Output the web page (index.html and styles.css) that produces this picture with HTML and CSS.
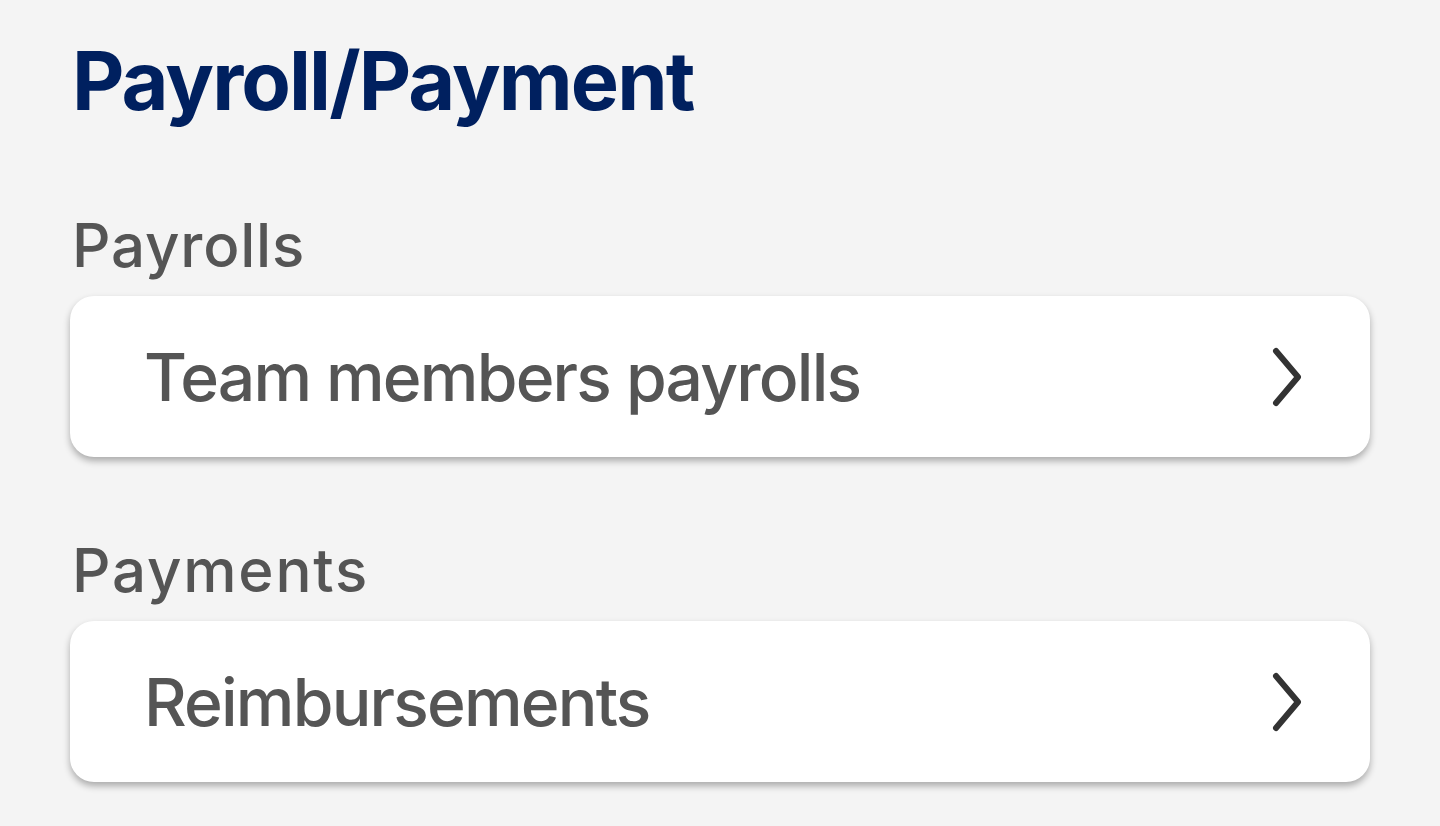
FILE: index.html
```html
<!DOCTYPE html>
<html lang="en">
<head>
    <meta charset="UTF-8">
    <meta name="viewport" content="width=device-width, initial-scale=1.0">
    <title>Payroll/Payment</title>
    <link rel="stylesheet" href="styles.css">
</head>
<body>
    <div class="page">
        <h1 class="title">Payroll/Payment</h1>

        <section class="group">
            <h2 class="group-label">Payrolls</h2>
            <a class="row" href="#">
                <span class="row-text">Team members payrolls</span>
                <svg class="chevron" viewBox="0 0 32 60" width="32" height="60">
                    <path d="M5 4 L27 30 L5 56" fill="none" stroke="#333" stroke-width="6" stroke-linecap="round" stroke-linejoin="round"/>
                </svg>
            </a>
        </section>

        <section class="group">
            <h2 class="group-label">Payments</h2>
            <a class="row" href="#">
                <span class="row-text">Reimbursements</span>
                <svg class="chevron" viewBox="0 0 32 60" width="32" height="60">
                    <path d="M5 4 L27 30 L5 56" fill="none" stroke="#333" stroke-width="6" stroke-linecap="round" stroke-linejoin="round"/>
                </svg>
            </a>
        </section>
    </div>
</body>
</html>
```
FILE: styles.css
```css
body {
    margin: 0;
    padding: 0;
    background-color: #f4f4f4;
    font-family: 'Inter', 'Noto Sans', sans-serif;
    height: 100vh;
    overflow: hidden;
}

.page {
    padding: 26px 70px 0 70px;
}

.title {
    margin: 0 0 0 2px;
    font-size: 81px;
    line-height: 110px;
    font-weight: 700;
    color: #00205f;
    letter-spacing: -1.9px;
}

.group {
    margin-top: 71px;
}

.group + .group {
    margin-top: 75px;
}

.group-label {
    margin: 0 0 13px 2px;
    font-size: 60px;
    line-height: 76px;
    font-weight: 500;
    color: #555;
    letter-spacing: 0.8px;
}

.group + .group .group-label {
    letter-spacing: 1.8px;
}

.row {
    display: flex;
    align-items: center;
    justify-content: space-between;
    height: 161px;
    padding: 0 67px 0 74px;
    box-sizing: border-box;
    background-color: #fff;
    border-radius: 24px;
    box-shadow: 0 4px 7px rgba(0, 0, 0, 0.3);
    text-decoration: none;
}

.row-text {
    font-size: 66px;
    font-weight: 500;
    color: #555;
    letter-spacing: -1.8px;
}

.chevron {
    display: block;
}
```
